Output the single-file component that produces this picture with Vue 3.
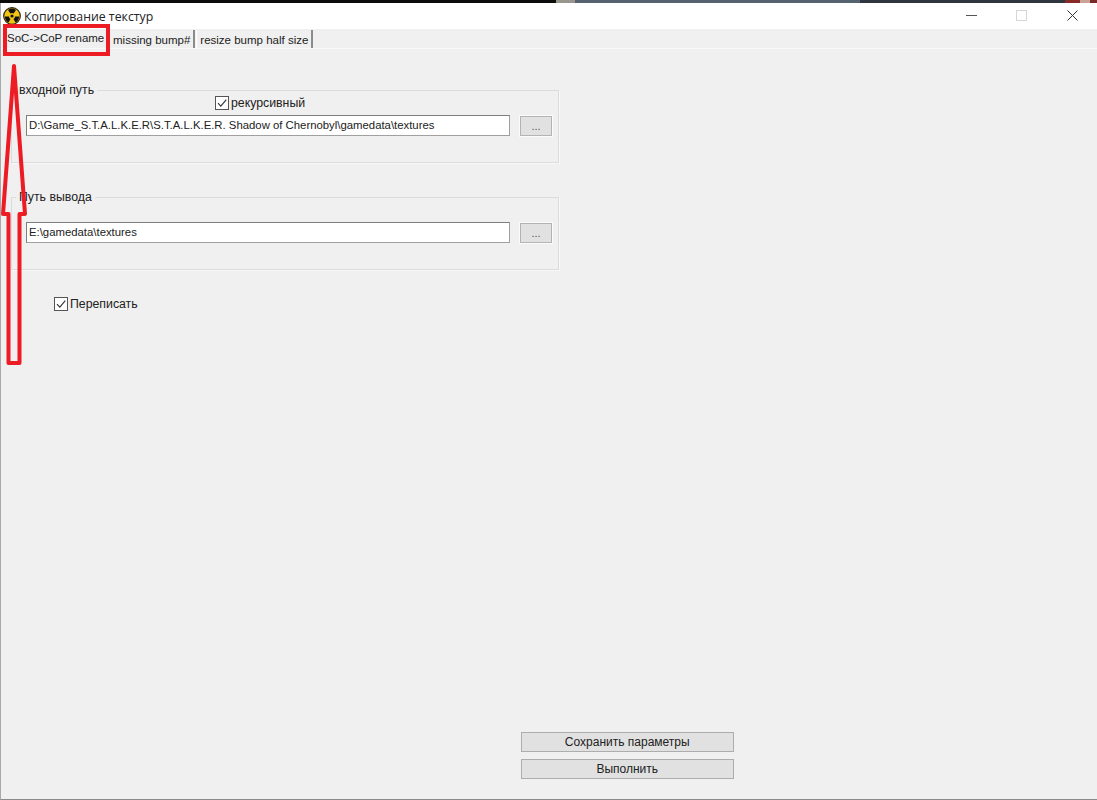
<script setup>
const tabs = [
  { label: 'SoC->CoP rename', active: true },
  { label: 'missing bump#', active: false },
  { label: 'resize bump half size', active: false },
]
</script>

<template>
  <div class="screen">
    <div class="desktop-strip">
      <span class="s-black"></span><span class="s-gray"></span><span class="s-blue"></span><span class="s-dark"></span><span class="s-red"></span><span class="s-light"></span><span class="s-dark2"></span>
    </div>
    <div class="window">
      <header class="titlebar">
        <svg class="app-icon" viewBox="0 0 18 18" aria-hidden="true">
          <circle cx="9" cy="9" r="8.3" fill="#f2c414" stroke="#2a2410" stroke-width="1.2" />
          <circle cx="9" cy="9" r="1.6" fill="#111" />
          <path d="M7.4 6.4 5 2.9a7.2 7.2 0 0 1 8 0l-2.4 3.5a3.2 3.2 0 0 0-3.2 0Z" fill="#111" />
          <path d="M6 9.4H1.9a7.2 7.2 0 0 0 3.6 6.2l2-3.5A3.2 3.2 0 0 1 6 9.4Z" fill="#111" />
          <path d="M12 9.4h4.1a7.2 7.2 0 0 1-3.6 6.2l-2-3.5A3.2 3.2 0 0 0 12 9.4Z" fill="#111" />
        </svg>
        <span class="title">Копирование текстур</span>
        <div class="controls">
          <span class="ctl-min"></span>
          <span class="ctl-max"></span>
          <svg class="ctl-close" viewBox="0 0 11 11" aria-hidden="true"><path d="M.5.5l10 10M10.500.5l-10 10" stroke="#333" stroke-width="1" fill="none" /></svg>
        </div>
      </header>

      <nav class="tabs">
        <div v-for="t in tabs" :key="t.label" class="tab" :class="{ active: t.active }">{{ t.label }}</div>
      </nav>

      <main class="content">
        <fieldset class="group first">
          <legend>входной путь</legend>
          <label class="check recursive"><span class="box"><svg viewBox="0 0 12 12"><path d="M2 6.200 4.800 9.200 10.300 2.600" fill="none" stroke="#333" stroke-width="1.100" /></svg></span>рекурсивный</label>
          <div class="path-row">
            <div class="field">D:\Game_S.T.A.L.K.E.R\S.T.A.L.K.E.R. Shadow of Chernobyl\gamedata\textures</div>
            <button class="dots">...</button>
          </div>
        </fieldset>

        <fieldset class="group second">
          <legend>Путь вывода</legend>
          <div class="path-row">
            <div class="field">E:\gamedata\textures</div>
            <button class="dots">...</button>
          </div>
        </fieldset>

        <label class="check overwrite"><span class="box"><svg viewBox="0 0 12 12"><path d="M2 6.200 4.800 9.200 10.300 2.600" fill="none" stroke="#333" stroke-width="1.100" /></svg></span>Переписать</label>

        <div class="actions">
          <button class="action">Сохранить параметры</button>
          <button class="action">Выполнить</button>
        </div>
      </main>
    </div>

    <div class="tab-highlight"></div>
    <svg class="arrow" viewBox="0 0 30 310" aria-hidden="true">
      <path d="M14 4 25 152H19.500V301H8.500V152H3Z" fill="none" stroke="#ed1c24" stroke-width="4" stroke-linejoin="round" />
    </svg>
  </div>
</template>

<style>
html, body { margin: 0; background: #f0f0f0; }
</style>

<style scoped>
.screen {
  position: relative;
  width: 1097px;
  height: 800px;
  overflow: hidden;
  display: flex;
  flex-direction: column;
  font-family: "Liberation Sans", Arial, sans-serif;
  font-size: 11px;
  color: #111;
}
.desktop-strip { display: flex; height: 3px; flex: none; }
.desktop-strip span { display: block; height: 100%; }
.s-black { width: 556px; background: #0c0c0c; }
.s-gray { width: 19px; background: #99968f; }
.s-blue { width: 285px; background: #55626f; }
.s-dark { width: 205px; background: #2f3640; }
.s-red { width: 15px; background: #8a2a26; }
.s-light { width: 10px; background: #c9a397; }
.s-dark2 { flex: 1; background: #7a2b28; }

.window {
  flex: 1;
  display: flex;
  flex-direction: column;
  min-height: 0;
  box-sizing: border-box;
  border-left: 1px solid #a9a9a9;
  border-bottom: 1px solid #8a8a8a;
  background: #f0f0f0;
}
.titlebar {
  height: 26px;
  flex: none;
  background: #fff;
  display: flex;
  align-items: center;
  padding-left: 2px;
}
.app-icon { width: 18px; height: 18px; margin-right: 3px; flex: none; }
.title { font-family: "Open Sans", sans-serif; font-size: 12.3px; color: #222; }
.controls { margin-left: auto; display: flex; align-items: center; height: 100%; padding-bottom: 2px; box-sizing: border-box; }
.ctl-min { width: 11px; height: 1px; background: #555; margin-right: 39px; }
.ctl-max { width: 9px; height: 9px; border: 1px solid #d6d6d6; margin-right: 40px; }
.ctl-close { width: 11px; height: 11px; margin-right: 19px; }

.tabs {
  height: 20px;
  flex: none;
  display: flex;
  align-items: flex-end;
  padding-left: 3px;
  box-sizing: border-box;
  border-bottom: 1px solid #f9f9f9;
  font-size: 11.5px;
}
.tab {
  height: 18px;
  line-height: 20px;
  padding: 0 3px 0 3px;
  border-right: 2px solid #8c8c8c;
  box-shadow: -1px 0 0 #fff;
  margin-right: 2px;
  white-space: nowrap;
  color: #222;
}
.tab.active {
  border-right: 0;
  box-shadow: none;
  width: 105px;
  box-sizing: border-box;
  padding: 0 0 0 3px;
  margin-right: 1px;
  line-height: 17px;
}

.content {
  flex: 1;
  display: flex;
  flex-direction: column;
  min-height: 0;
  padding: 0 0 20px 10px;
  box-sizing: border-box;
}
.group {
  position: relative;
  width: 548px;
  box-sizing: border-box;
  margin: 0;
  padding: 0;
  border: 1px solid #dcdcdc;
  box-shadow: 1px 1px 0 #f8f8f8;
}
.group legend {
  margin-left: 4px;
  padding: 0 3px 0 3px;
  font-size: 12.3px;
  line-height: 14px;
  color: #222;
}
.group.first { margin-top: 34px; height: 80px; }
.group.second { margin-top: 27px; height: 80px; }
.group.first .path-row { margin-top: 4px; }
.group.second .path-row { margin-top: 18px; }

.check { display: flex; align-items: center; font-size: 12.3px; color: #222; }
.box {
  width: 12px;
  height: 12px;
  border: 1px solid #555;
  background: #fff;
  margin-right: 2px;
  display: block;
  flex: none;
}
.box svg { display: block; width: 12px; height: 12px; }
.recursive { margin: -2px 0 0 203px; height: 16px; }
.overwrite { margin: 26px 0 0 43px; height: 16px; }

.path-row { display: flex; align-items: center; padding-left: 14px; }
.field {
  width: 484px;
  height: 21px;
  box-sizing: border-box;
  border: 1px solid #7e7e7e;
  border-right-color: #a0a0a0;
  border-bottom-color: #a0a0a0;
  background: #fff;
  padding-left: 2px;
  font-size: 11.35px;
  line-height: 18px;
  white-space: nowrap;
  color: #222;
}
.dots {
  width: 32px;
  height: 20px;
  margin-left: 10px;
  padding: 0;
  box-sizing: border-box;
  border: 1px solid #b4b4b4;
  box-shadow: 0 0 0 1px #fbfbfb;
  background: #e1e1e1;
  font: 11px/16px "Liberation Sans", sans-serif;
  color: #555;
}
.actions {
  margin: auto 0 0 509.5px;
  display: flex;
  flex-direction: column;
  gap: 7px;
  width: 213.5px;
}
.action {
  height: 20px;
  padding: 0;
  box-sizing: border-box;
  border: 1px solid #adadad;
  background: #e1e1e1;
  font: 12px/18px "Liberation Sans", sans-serif;
  color: #222;
}

.tab-highlight {
  position: absolute;
  left: 3px;
  top: 24px;
  width: 107px;
  height: 32px;
  box-sizing: border-box;
  border: 4px solid #ed1c24;
}
.arrow {
  position: absolute;
  left: 0;
  top: 62px;
  width: 30px;
  height: 310px;
}
</style>
